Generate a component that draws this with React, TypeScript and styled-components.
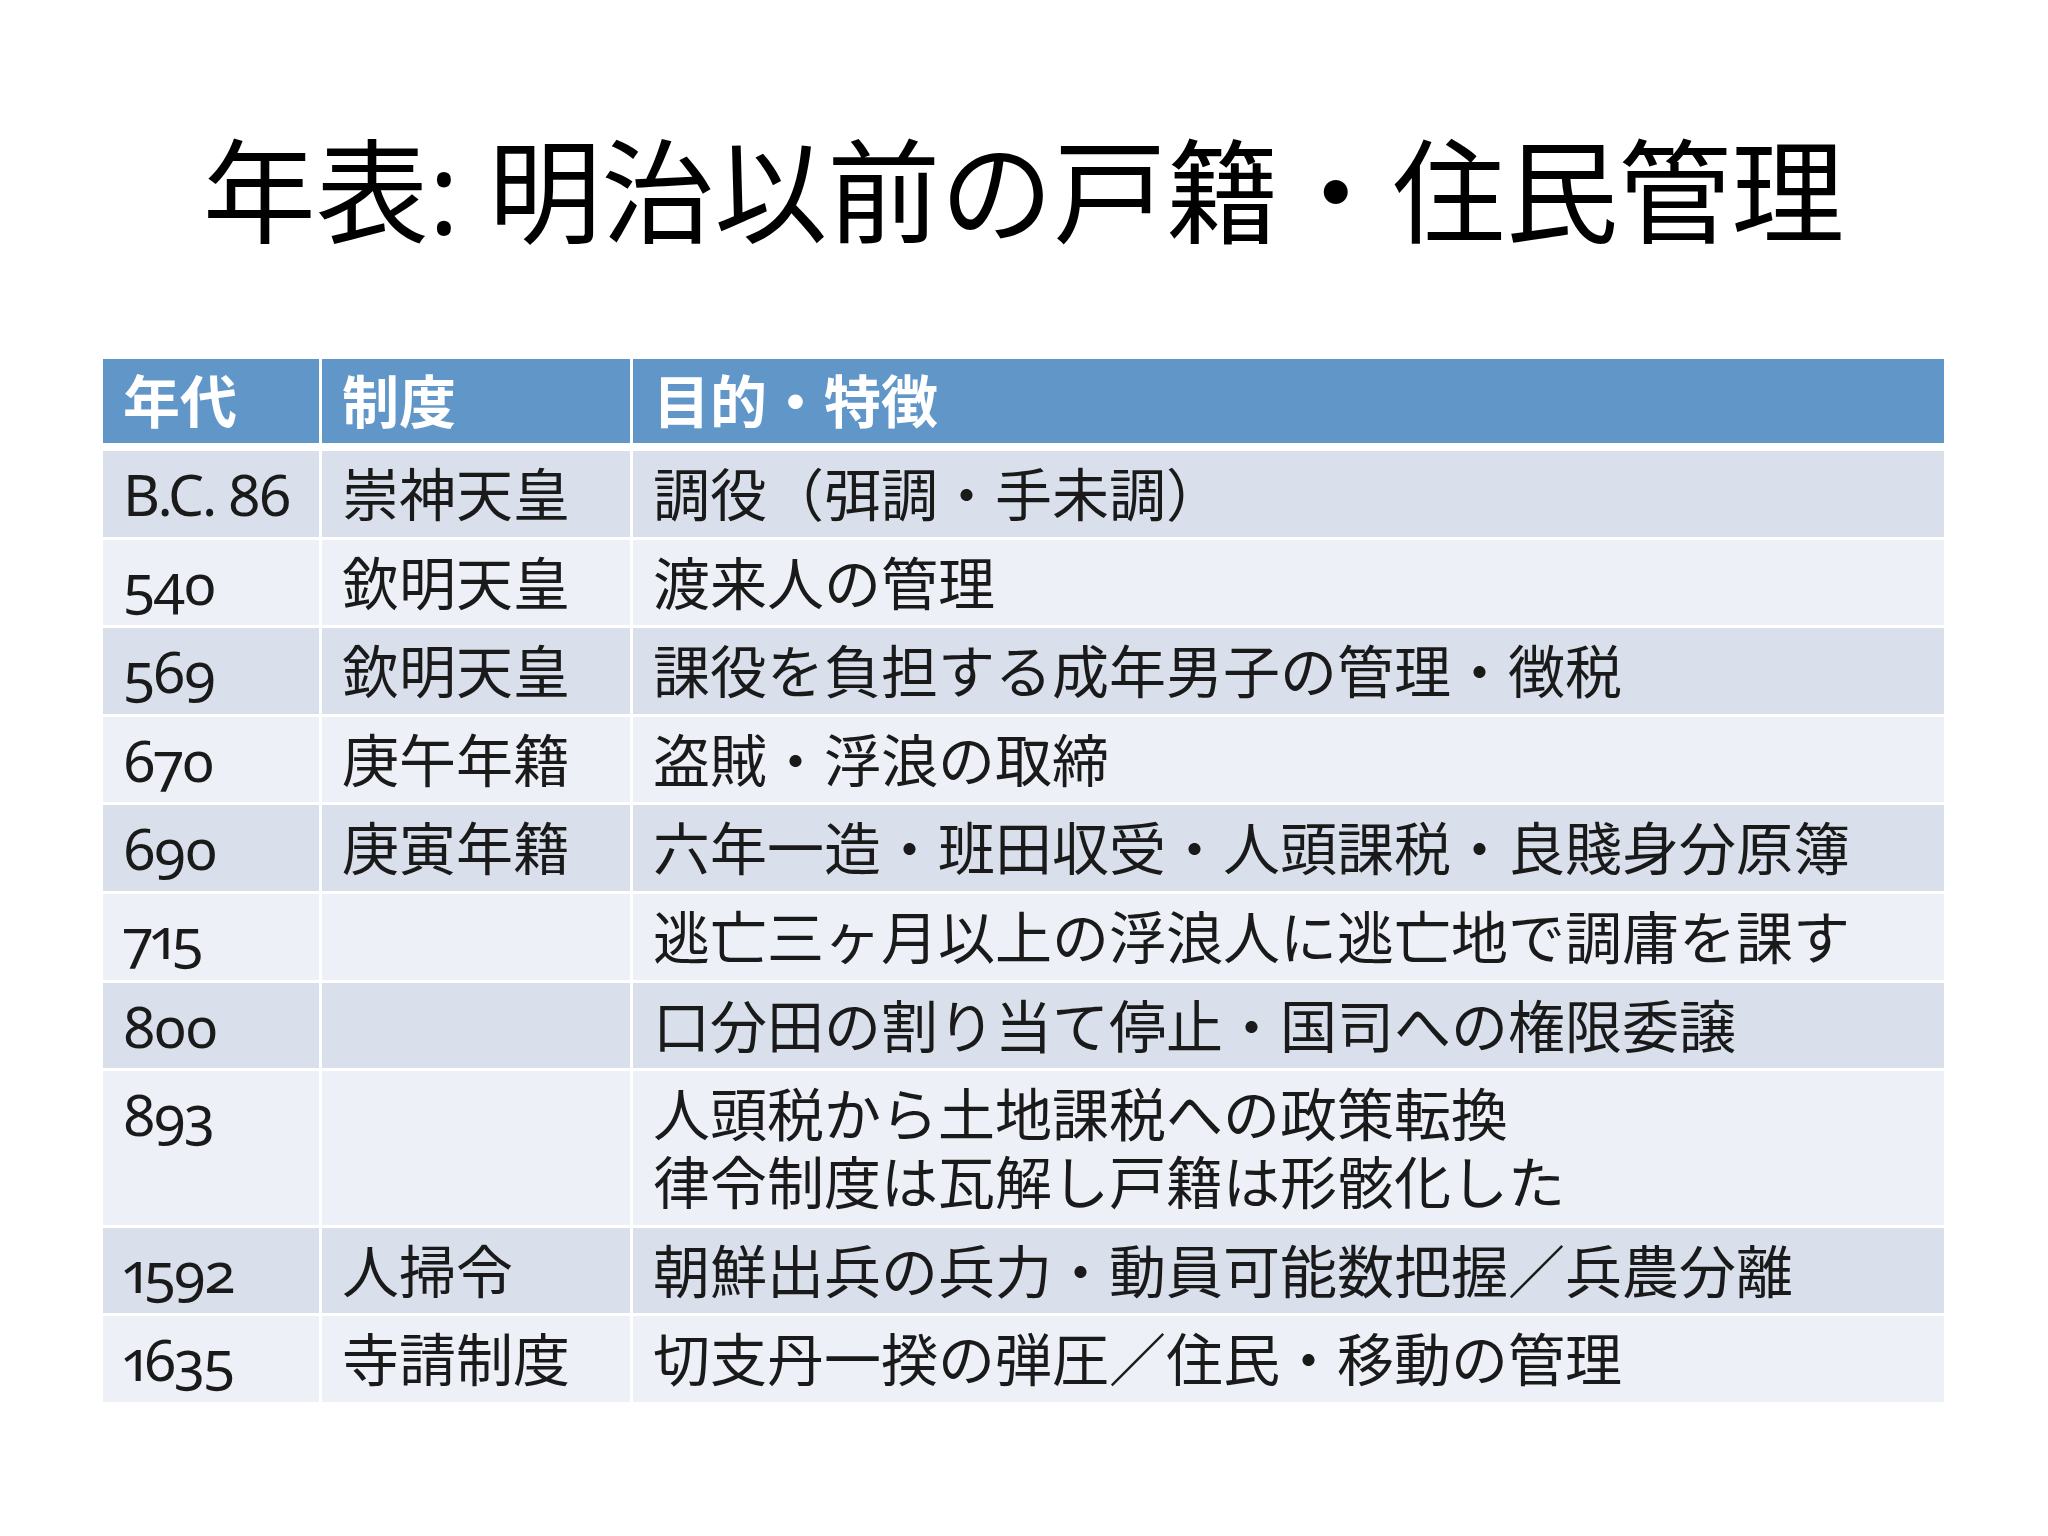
import styled, { createGlobalStyle } from "styled-components";

const GlobalStyle = createGlobalStyle`
  html, body {
    margin: 0;
    padding: 0;
    background: #ffffff;
  }
  body {
    font-family: "Noto Sans", "Noto Sans CJK JP", sans-serif;
    color: #1a1a1a;
  }
`;

type Tone = "head" | "dark" | "light";

interface IEntry {
  year: string;
  system: string;
  lines: string[];
}

const ENTRIES: IEntry[] = [
  { year: "B.C. 86", system: "崇神天皇", lines: ["調役（弭調・手未調）"] },
  { year: "540", system: "欽明天皇", lines: ["渡来人の管理"] },
  { year: "569", system: "欽明天皇", lines: ["課役を負担する成年男子の管理・徴税"] },
  { year: "670", system: "庚午年籍", lines: ["盗賊・浮浪の取締"] },
  { year: "690", system: "庚寅年籍", lines: ["六年一造・班田収受・人頭課税・良賤身分原簿"] },
  { year: "715", system: "", lines: ["逃亡三ヶ月以上の浮浪人に逃亡地で調庸を課す"] },
  { year: "800", system: "", lines: ["口分田の割り当て停止・国司への権限委譲"] },
  {
    year: "893",
    system: "",
    lines: ["人頭税から土地課税への政策転換", "律令制度は瓦解し戸籍は形骸化した"],
  },
  { year: "1592", system: "人掃令", lines: ["朝鮮出兵の兵力・動員可能数把握／兵農分離"] },
  { year: "1635", system: "寺請制度", lines: ["切支丹一揆の弾圧／住民・移動の管理"] },
];

const TONES: Record<Tone, string> = {
  head: "#6196c8",
  dark: "#d9e0eb",
  light: "#edf0f7",
};

const S = {
  Slide: styled.div`
    width: 2048px;
    height: 1536px;
    box-sizing: border-box;
    padding: 122px 104px 0 103px;
    display: flex;
    flex-direction: column;
  `,
  Title: styled.h1`
    margin: 0;
    font-family: "Noto Sans", "Noto Sans CJK JP", sans-serif;
    font-weight: 400;
    font-size: 113px;
    line-height: 136px;
    text-align: center;
    color: #000000;
  `,
  Table: styled.div`
    margin-top: 101px;
    display: flex;
    flex-direction: column;
    gap: 3px;
  `,
  Row: styled.div<{ $head?: boolean }>`
    display: grid;
    grid-template-columns: 216px 308px 1fr;
    column-gap: 3px;
    margin-bottom: ${(p) => (p.$head ? "5px" : "0")};
  `,
  Cell: styled.div<{ $tone: Tone }>`
    background: ${(p) => TONES[p.$tone]};
    padding: ${(p) => (p.$tone === "head" ? "8px 20px" : "9px 20px 8.6px")};
    font-size: 57px;
    line-height: 68px;
    font-weight: ${(p) => (p.$tone === "head" ? 700 : 400)};
    color: ${(p) => (p.$tone === "head" ? "#ffffff" : "#1a1a1a")};
    white-space: nowrap;
  `,
  Year: styled.span`
    font-variant-numeric: oldstyle-nums proportional-nums;
    letter-spacing: -2px;
  `,
  Line: styled.div``,
};

const App = () => {
  return (
    <>
      <GlobalStyle />
      <S.Slide>
        <S.Title>年表: 明治以前の戸籍・住民管理</S.Title>
        <S.Table>
          <S.Row $head>
            <S.Cell $tone="head">年代</S.Cell>
            <S.Cell $tone="head">制度</S.Cell>
            <S.Cell $tone="head">目的・特徴</S.Cell>
          </S.Row>
          {ENTRIES.map((entry, i) => {
            const tone: Tone = i % 2 === 0 ? "dark" : "light";
            return (
              <S.Row key={entry.year}>
                <S.Cell $tone={tone}>
                  <S.Year>{entry.year}</S.Year>
                </S.Cell>
                <S.Cell $tone={tone}>{entry.system}</S.Cell>
                <S.Cell $tone={tone}>
                  {entry.lines.map((line) => (
                    <S.Line key={line}>{line}</S.Line>
                  ))}
                </S.Cell>
              </S.Row>
            );
          })}
        </S.Table>
      </S.Slide>
    </>
  );
};

export default App;
